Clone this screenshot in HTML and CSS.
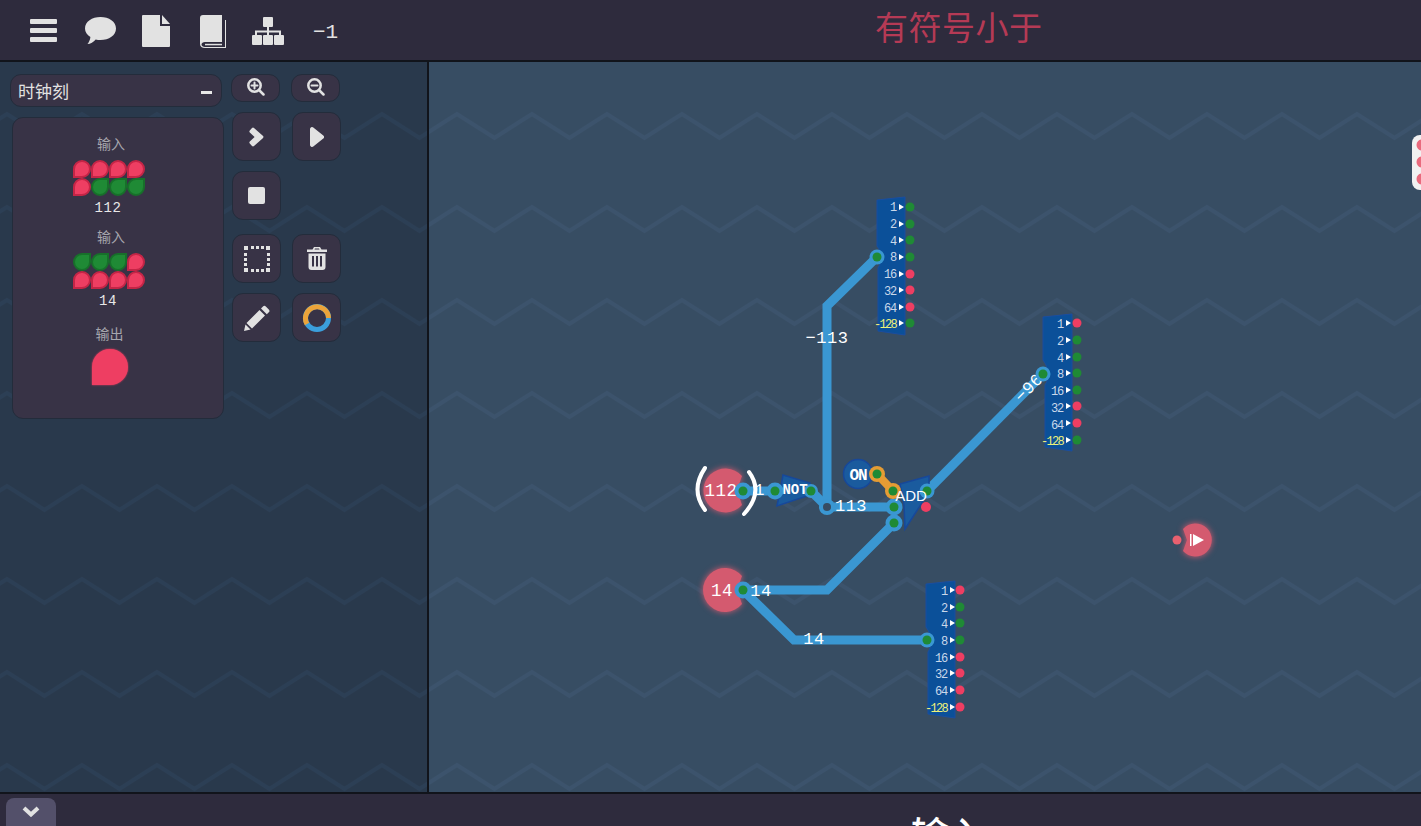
FILE: index.html
```html
<!DOCTYPE html>
<html lang="zh">
<head>
<meta charset="utf-8">
<title>有符号小于</title>
<link rel="stylesheet" href="styles.css">
</head>
<body>
<header class="topbar">
  <div class="tools">
    <svg class="ic" width="27" height="24" viewBox="0 0 27 24"><rect y="0" width="27" height="5" rx="1"/><rect y="9" width="27" height="5" rx="1"/><rect y="18" width="27" height="5" rx="1"/></svg>
    <svg class="ic" width="31" height="28" viewBox="0 0 31 28"><path d="M15.500 0C24 0 31 4.700 31 11.500S24 23 15.500 23c-1.700 0-3.300-.2-4.800-.6C8.500 24.700 5.500 27 2.500 27c1.300-1.500 2.600-4 2.900-7C2 18 0 15 0 11.500 0 4.700 7 0 15.500 0Z"/></svg>
    <svg class="ic" width="28" height="32" viewBox="0 0 28 32"><path d="M0 1a1 1 0 0 1 1-1H18V11H28V31a1 1 0 0 1-1 1H1a1 1 0 0 1-1-1Z"/><path d="M20 0 28 9H20Z"/></svg>
    <svg class="ic" width="26" height="33" viewBox="0 0 26 33"><path d="M3 0H22V27H5C3 27 1.500 28 1.500 29.500S3 32 5 32H25V5H26V33H5C2 33 0 31.500 0 29V3C0 1 1 0 3 0Z"/><path d="M5 28.800H22V30.300H5Z"/></svg>
    <svg class="ic" width="32" height="28" viewBox="0 0 32 28"><rect x="11" y="0" width="10" height="10" rx="1"/><rect x="0" y="18" width="10" height="10" rx="1"/><rect x="11" y="18" width="10" height="10" rx="1"/><rect x="22" y="18" width="10" height="10" rx="1"/><path d="M15 10h2v3.500h12V18h-2v-2.500H17V18h-2v-2.500H5V18H3v-4.500h12Z"/></svg>
    <span class="count">−1</span>
  </div>
  <h1 class="title">有符号小于</h1>
</header>

<main class="work">
  <aside class="side">
    <div class="side-left">
      <div class="select"><span>时钟刻</span><span class="select-mark"></span></div>
      <section class="panel">
        <div class="panel-label">输入</div>
        <div class="bits">
          <i class="pin red"></i><i class="pin red"></i><i class="pin red"></i><i class="pin red"></i>
          <i class="pin red"></i><i class="pin green"></i><i class="pin green"></i><i class="pin green"></i>
        </div>
        <div class="panel-value">112</div>
        <div class="panel-label second">输入</div>
        <div class="bits">
          <i class="pin green"></i><i class="pin green"></i><i class="pin green"></i><i class="pin red"></i>
          <i class="pin red"></i><i class="pin red"></i><i class="pin red"></i><i class="pin red"></i>
        </div>
        <div class="panel-value">14</div>
        <div class="panel-label third">输出</div>
        <div class="out-pin"></div>
      </section>
    </div>
    <div class="side-right">
      <div class="btn-row first">
        <button class="btn small"><svg class="ic" width="18" height="18" viewBox="0 0 18 18"><path class="stroke" d="M12 12 16.500 16.500"/><circle class="stroke" cx="7.500" cy="7.500" r="6.200"/><path class="stroke thin" d="M4.500 7.500h6M7.500 4.500v6"/></svg></button>
        <button class="btn small"><svg class="ic" width="18" height="18" viewBox="0 0 18 18"><path class="stroke" d="M12 12 16.500 16.500"/><circle class="stroke" cx="7.500" cy="7.500" r="6.200"/><path class="stroke thin" d="M4.500 7.500h6"/></svg></button>
      </div>
      <div class="btn-row second">
        <button class="btn"><svg class="ic" width="15" height="20" viewBox="0 0 15 20"><path d="M0.800 3.500 3 1 a1.500 1.500 0 0 1 2 0L13.800 8.800a1.600 1.600 0 0 1 0 2.400L5 19a1.500 1.500 0 0 1-2 0L.8 16.500a1.500 1.500 0 0 1 0-2L5.600 10 .8 5.500a1.500 1.500 0 0 1 0-2Z"/></svg></button>
        <button class="btn"><svg class="ic" width="14" height="20" viewBox="0 0 14 20"><path d="M0 2a2 2 0 0 1 3.300-1.500L13.300 8.500a2 2 0 0 1 0 3L3.300 19.500A2 2 0 0 1 0 18Z"/></svg></button>
      </div>
      <div class="btn-row second">
        <button class="btn"><svg class="ic" width="17" height="17" viewBox="0 0 17 17"><rect width="17" height="17" rx="2"/></svg></button>
      </div>
      <div class="btn-row third">
        <button class="btn"><svg class="ic" width="26" height="26" viewBox="0 0 26 26"><path d="M0 0h4v4H0ZM7 0h3v3H7ZM12 0h3v3h-3ZM17 0h3v3h-3ZM22 0h4v4h-4ZM0 7h3v3H0ZM23 7h3v3h-3ZM0 12h3v3H0ZM23 12h3v3h-3ZM0 17h3v3H0ZM23 17h3v3h-3ZM0 22h4v4H0ZM7 23h3v3H7ZM12 23h3v3h-3ZM17 23h3v3h-3ZM22 22h4v4h-4Z"/></svg></button>
        <button class="btn"><svg class="ic" width="20" height="23" viewBox="0 0 20 23"><path d="M7 0h6l1.500 2.500H20V5H0V2.500h5.500ZM8 1.500 7.500 2.500h5L12 1.500Z"/><path fill-rule="evenodd" d="M1.500 6.500h17V20a3 3 0 0 1-3 3h-11a3 3 0 0 1-3-3ZM5 9v10.500h2V9ZM9 9v10.500h2V9ZM13 9v10.500h2V9Z"/></svg></button>
      </div>
      <div class="btn-row fourth">
        <button class="btn"><svg class="ic" width="26" height="26" viewBox="0 0 26 26"><path d="M19 1.500a2 2 0 0 1 2.800 0l3 3a2 2 0 0 1 0 2.800l-2 2L17 3.500ZM15.500 5 21 10.500 8 23.500 2.500 18Z"/><path d="M1.500 19.500 6.500 24.500 0 26Z"/></svg></button>
        <button class="btn"><svg width="30" height="30" viewBox="0 0 30 30"><circle class="ring-blue" cx="15" cy="15" r="11.500"/><path class="ring-orange" d="M5 21A11.500 11.500 0 1 1 26.500 15"/></svg></button>
      </div>
    </div>
  </aside>

  <section class="canvas">
    <svg class="circuit" width="992" height="730" viewBox="429 62 992 730">
      <!-- wires -->
      <path class="wire" d="M743 491H775"/>
      <path class="wire" d="M811 491 827 507H894"/>
      <path class="wire" d="M827 507V306L877 257"/>
      <path class="wire" d="M927 491 1043 374"/>
      <path class="wire" d="M743 590H827L894 523"/>
      <path class="wire" d="M743 590 794 640H927"/>
      <path class="wire-on" d="M877 474 893 491"/>

      <!-- inputs -->
      <path class="io" d="M742 476A22 22 0 1 0 742 505L737 490Z"/>
      <path class="bracket" d="M705 468Q690 490 705 510"/>
      <path class="bracket" d="M749 472Q764 492 744 514"/>
      <text class="val big" x="721" y="496">112</text>
      <path class="io" d="M742 576A22 22 0 1 0 742 604L737 590Z"/>
      <text class="val big" x="722" y="596">14</text>

      <!-- gates -->
      <path class="gate" d="M783 475 810 483 810 495 777 506 780 491Z"/>
      <circle class="gate" cx="858" cy="474" r="14.500"/>
      <path class="gate" d="M900 484 929 476 929 492 905 529 904 505Z"/>

      <!-- wire values -->
      <text class="val" x="765" y="495">1:</text>
      <text class="val" x="851" y="511">113</text>
      <text class="val" x="827" y="343">−113</text>
      <text class="val" x="761" y="596">14</text>
      <text class="val" x="814" y="644">14</text>
      <text class="val" transform="rotate(-45 1029 388)" x="1029" y="393">−96</text>

      <!-- ports -->
      <circle class="ring" cx="743" cy="491" r="8.500"/><circle class="dot-g" cx="743" cy="491" r="4.500"/>
      <circle class="ring" cx="775" cy="491" r="8.500"/><circle class="dot-g" cx="775" cy="491" r="4.500"/>
      <circle class="ring" cx="811" cy="491" r="7"/><circle class="dot-g" cx="811" cy="491" r="4.500"/>
      <circle class="ring" cx="827" cy="507" r="8"/><circle class="hollow" cx="827" cy="507" r="4"/>
      <circle class="ring" cx="894" cy="507" r="8.500"/><circle class="dot-g" cx="894" cy="507" r="4.500"/>
      <circle class="ring" cx="894" cy="523" r="8.500"/><circle class="dot-g" cx="894" cy="523" r="4.500"/>
      <circle class="ring" cx="927" cy="491" r="7.500"/><circle class="dot-g" cx="927" cy="491" r="4.500"/>
      <circle class="ring" cx="743" cy="590" r="8.500"/><circle class="dot-g" cx="743" cy="590" r="4.500"/>
      <circle class="ring-on" cx="877" cy="474" r="8"/><circle class="dot-g" cx="877" cy="474" r="4.500"/>
      <circle class="ring-on" cx="893" cy="491" r="8"/><circle class="dot-g" cx="893" cy="491" r="4.500"/>
      <circle class="dot-r" cx="926" cy="507" r="5"/>

      <!-- gate labels -->
      <text class="gate-label" x="795" y="494">NOT</text>
      <text class="gate-label on" x="858" y="480">ON</text>
      <text class="gate-label add" x="911" y="501">ADD</text>

      <!-- display −113 -->
      <g>
        <path class="display" d="M877 200 905 197V335L878 331V268C882 262 882 252 877 246Z"/>
        <circle class="ring" cx="877" cy="257" r="7.500"/><circle class="dot-g" cx="877" cy="257" r="4.500"/>
        <text class="b" x="896" y="211">1</text><text class="b" x="896" y="228">2</text><text class="b" x="896" y="245">4</text><text class="b" x="896" y="261">8</text><text class="b" x="896" y="278">16</text><text class="b" x="896" y="295">32</text><text class="b" x="896" y="312">64</text><text class="b neg" x="896" y="328">-128</text>
        <path class="tri" d="M899 204l5 3-5 3ZM899 221l5 3-5 3ZM899 237l5 3-5 3ZM899 254l5 3-5 3ZM899 271l5 3-5 3ZM899 287l5 3-5 3ZM899 304l5 3-5 3ZM899 320l5 3-5 3Z"/>
        <circle class="dot-g" cx="910" cy="207" r="4.500"/><circle class="dot-g" cx="910" cy="224" r="4.500"/><circle class="dot-g" cx="910" cy="240" r="4.500"/><circle class="dot-g" cx="910" cy="257" r="4.500"/><circle class="dot-r" cx="910" cy="274" r="4.500"/><circle class="dot-r" cx="910" cy="290" r="4.500"/><circle class="dot-r" cx="910" cy="307" r="4.500"/><circle class="dot-g" cx="910" cy="323" r="4.500"/>
      </g>

      <!-- display −96 -->
      <g>
        <path class="display" d="M1043 317 1072 314V451L1045 447V385C1050 378 1049 368 1043 360Z"/>
        <circle class="ring" cx="1043" cy="374" r="7.500"/><circle class="dot-g" cx="1043" cy="374" r="4.500"/>
        <text class="b" x="1063" y="328">1</text><text class="b" x="1063" y="345">2</text><text class="b" x="1063" y="362">4</text><text class="b" x="1063" y="378">8</text><text class="b" x="1063" y="395">16</text><text class="b" x="1063" y="412">32</text><text class="b" x="1063" y="429">64</text><text class="b neg" x="1063" y="445">-128</text>
        <path class="tri" d="M1066 320l5 3-5 3ZM1066 337l5 3-5 3ZM1066 354l5 3-5 3ZM1066 370l5 3-5 3ZM1066 387l5 3-5 3ZM1066 403l5 3-5 3ZM1066 420l5 3-5 3ZM1066 437l5 3-5 3Z"/>
        <circle class="dot-r" cx="1077" cy="323" r="4.500"/><circle class="dot-g" cx="1077" cy="340" r="4.500"/><circle class="dot-g" cx="1077" cy="357" r="4.500"/><circle class="dot-g" cx="1077" cy="373" r="4.500"/><circle class="dot-g" cx="1077" cy="390" r="4.500"/><circle class="dot-r" cx="1077" cy="406" r="4.500"/><circle class="dot-r" cx="1077" cy="423" r="4.500"/><circle class="dot-g" cx="1077" cy="440" r="4.500"/>
      </g>

      <!-- display 14 -->
      <g>
        <path class="display" d="M926 584 955 581V718L928 714V652C933 645 932 635 926 627Z"/>
        <circle class="ring" cx="927" cy="640" r="7.500"/><circle class="dot-g" cx="927" cy="640" r="4.500"/>
        <text class="b" x="947" y="595">1</text><text class="b" x="947" y="612">2</text><text class="b" x="947" y="628">4</text><text class="b" x="947" y="645">8</text><text class="b" x="947" y="662">16</text><text class="b" x="947" y="678">32</text><text class="b" x="947" y="695">64</text><text class="b neg" x="947" y="712">-128</text>
        <path class="tri" d="M950 587l5 3-5 3ZM950 604l5 3-5 3ZM950 620l5 3-5 3ZM950 637l5 3-5 3ZM950 654l5 3-5 3ZM950 670l5 3-5 3ZM950 687l5 3-5 3ZM950 704l5 3-5 3Z"/>
        <circle class="dot-r" cx="960" cy="590" r="4.500"/><circle class="dot-g" cx="960" cy="607" r="4.500"/><circle class="dot-g" cx="960" cy="623" r="4.500"/><circle class="dot-g" cx="960" cy="640" r="4.500"/><circle class="dot-r" cx="960" cy="657" r="4.500"/><circle class="dot-r" cx="960" cy="673" r="4.500"/><circle class="dot-r" cx="960" cy="690" r="4.500"/><circle class="dot-r" cx="960" cy="707" r="4.500"/>
      </g>

      <!-- output -->
      <path class="io" d="M1183 529A16.500 16.500 0 1 1 1183 551L1187 540Z"/>
      <circle class="dot-out" cx="1177" cy="540" r="4.500"/>
      <path class="play" d="M1190 534h1.500v12H1190ZM1193 534 1204 540 1193 546Z"/>

      <!-- clipped node at the edge -->
      <rect class="edge-node" x="1412" y="135" width="30" height="55" rx="8"/>
      <circle class="edge-dot" cx="1422" cy="145" r="5.500"/>
      <circle class="edge-dot" cx="1422" cy="162" r="5.500"/>
      <circle class="edge-dot" cx="1422" cy="179" r="5.500"/>
    </svg>
  </section>
</main>

<footer class="bottombar">
  <button class="collapse"><svg class="ic" width="18" height="11" viewBox="0 0 18 11"><path class="stroke chev" d="M2 2 9 8.500 16 2"/></svg></button>
  <div class="bottom-title">输入</div>
</footer>
</body>
</html>
```

FILE: styles.css
```css
* { box-sizing: border-box; }
html, body { margin: 0; height: 100%; }
body {
  display: flex;
  flex-direction: column;
  height: 826px;
  overflow: hidden;
  background: #2e2b3d;
  color: #e2e2e2;
  font-family: "Liberation Mono", "Noto Sans CJK SC", monospace;
}

/* top bar */
.topbar {
  flex: none;
  height: 62px;
  display: flex;
  align-items: center;
  background: #2e2b3d;
  border-bottom: 2px solid #11141b;
  padding-left: 30px;
}
.tools {
  display: grid;
  grid-template-columns: 55px 57px 58px 52px 61px 40px;
  align-items: center;
  justify-items: start;
  width: 323px;
  padding-top: 2px;
}
.ic { fill: #e2e2e2; display: block; }
.stroke { fill: none; stroke: #e2e2e2; stroke-width: 2.500; stroke-linecap: round; }
.stroke.thin { stroke-width: 2; }
.stroke.chev { stroke-width: 4; stroke-linecap: butt; }
.count { font-size: 21px; padding-top: 2px; white-space: nowrap; }
.title {
  margin: 0 0 8px 522px;
  font: 400 33px/1 "Noto Sans CJK SC", sans-serif;
  letter-spacing: 0.5px;
  color: #b53a55;
  white-space: nowrap;
}

/* work area */
.work { flex: none; height: 730px; display: flex; }
.side {
  flex: none;
  width: 429px;
  display: flex;
  padding: 12px 0 0 10px;
  border-right: 2px solid #11141b;
  background-color: #29394c;
  background-image: url("data:image/svg+xml,%3Csvg xmlns='http://www.w3.org/2000/svg' width='75' height='93'%3E%3Cpath d='M-30.500 45 7 21 44.500 45 82 21' fill='none' stroke='%232c3f55' stroke-width='4'/%3E%3C/svg%3E");
  background-position: 0 -62px;
}
.side-left { width: 221px; flex: none; }
.select {
  width: 212px;
  height: 33px;
  padding: 0 8px 0 7px;
  display: flex;
  align-items: center;
  justify-content: space-between;
  background: #383346;
  border: 1px solid #232c3b;
  border-radius: 11px;
  font: 400 17px/1 "Noto Sans CJK SC", sans-serif;
}
.select-mark { width: 11px; height: 3px; margin: 4px 1px 0 0; background: #e8e8e8; }
.panel {
  width: 212px;
  height: 302px;
  margin: 10px 0 0 2px;
  padding-top: 16px;
  display: flex;
  flex-direction: column;
  align-items: center;
  background: #383346;
  border: 1px solid #232c3b;
  border-radius: 11px;
}
.panel-label { font: 400 14px/18px "Noto Sans CJK SC", sans-serif; color: #a6a6ad; margin-right: 14px; }
.panel-label.second { margin-top: 11px; }
.panel-label.third { margin-top: 15px; margin-right: 17px; }
.bits {
  width: 72px;
  margin: 8px 0 0 -18px;
  display: grid;
  grid-template-columns: repeat(4, 18px);
  grid-auto-rows: 18px;
}
.pin { display: block; width: 18px; height: 18px; border: 2px solid; }
.pin.red { background: #ee3e62; border-color: #c42546; border-radius: 50% 50% 50% 0; }
.pin.green { background: #1f8a35; border-color: #17702a; border-radius: 50% 0 50% 50%; }
.panel-value { font-size: 14px; line-height: 16px; letter-spacing: 0.600px; color: #e8e8e8; margin: 4px 20px 0 0; }
.out-pin {
  width: 36px;
  height: 36px;
  margin: 7px 17px 0 0;
  background: #ee3e62;
  border-radius: 50% 50% 50% 0;
  box-shadow: 0 0 2px #ee3e62;
}

.side-right { flex: none; width: 120px; }
.btn-row { display: flex; gap: 11px; }
.btn-row.first { gap: 11px; }
.btn-row.second { margin: 10px 0 0 1px; }
.btn-row.third { margin: 14px 0 0 1px; }
.btn-row.fourth { margin: 10px 0 0 1px; }
.btn {
  width: 49px;
  height: 49px;
  padding: 0;
  display: flex;
  align-items: center;
  justify-content: center;
  background: #383346;
  border: 1px solid #232c3b;
  border-radius: 11px;
}
.btn.small { height: 28px; padding-bottom: 3px; }
.ring-blue { fill: none; stroke: #3b9fdc; stroke-width: 5; }
.ring-orange { fill: none; stroke: #eba43a; stroke-width: 5; }

/* canvas */
.canvas {
  flex: 1;
  position: relative;
  overflow: hidden;
  background-color: #374d63;
  background-image: url("data:image/svg+xml,%3Csvg xmlns='http://www.w3.org/2000/svg' width='75' height='93'%3E%3Cpath d='M-30.500 45 7 21 44.500 45 82 21' fill='none' stroke='%233c536c' stroke-width='4'/%3E%3C/svg%3E");
  background-position: -429px -62px;
}
.circuit { position: absolute; left: 0; top: 0; display: block; }
.wire { fill: none; stroke: #3a97d2; stroke-width: 9; stroke-linejoin: miter; }
.wire-on { fill: none; stroke: #e59c34; stroke-width: 8; stroke-linecap: round; }
.ring { fill: #3a97d2; }
.ring-on { fill: #e59c34; }
.dot-g { fill: #1f8a35; }
.dot-r { fill: #ee3e62; }
.hollow { fill: #374d63; }
.io { fill: #d45a6f; filter: drop-shadow(0 0 3px #d45a6f); }
.dot-out { fill: #e8606f; }
.play { fill: #fff; }
.bracket { fill: none; stroke: #fff; stroke-width: 4; stroke-linecap: round; }
.val {
  fill: #fff;
  font: 400 17px "Liberation Mono", monospace;
  letter-spacing: 0.500px;
  text-anchor: middle;
}
.val.big { font-size: 17.500px; }
.gate { fill: #1a5b9e; stroke: #17489a; stroke-width: 1.500; }
.gate-label {
  fill: #fff;
  font: 700 14px "Liberation Mono", monospace;
  text-anchor: middle;
}
.gate-label.on { font-size: 16px; letter-spacing: -1px; }
.gate-label.add { font: 400 15px "Liberation Sans", sans-serif; }
.display { fill: #0b5099; stroke: #1a4da0; stroke-width: 1; }
.b {
  fill: #c9d8ea;
  font: 400 12px "Liberation Mono", monospace;
  letter-spacing: -1.200px;
  text-anchor: end;
}
.b.neg { fill: #eef07a; letter-spacing: -1.700px; }
.tri { fill: #fff; }
.edge-node { fill: #f1f1f1; }
.edge-dot { fill: #e96a7d; }

/* bottom bar */
.bottombar {
  flex: none;
  height: 34px;
  display: flex;
  align-items: flex-start;
  overflow: hidden;
  background: #2e2b3d;
  border-top: 2px solid #11141b;
}
.collapse {
  width: 50px;
  height: 40px;
  margin: 4px 0 0 6px;
  padding: 8px 0 0;
  display: flex;
  justify-content: center;
  align-items: flex-start;
  background: #53506a;
  border: 0;
  border-radius: 8px;
}
.bottom-title {
  margin: 14px 0 0 855px;
  font: 500 38px/1.300 "Noto Sans CJK SC", sans-serif;
  color: #fff;
  white-space: nowrap;
}
```
